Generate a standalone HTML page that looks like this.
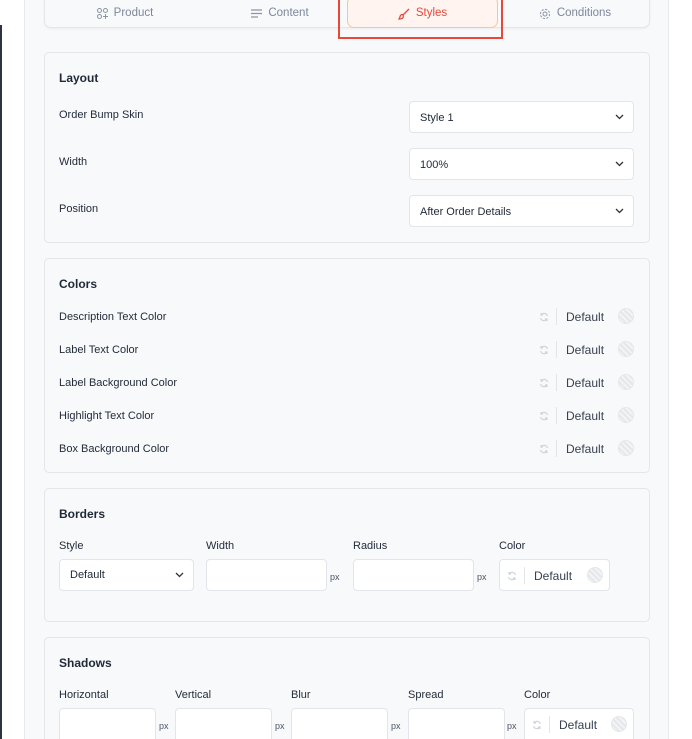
<!DOCTYPE html>
<html style="overflow:hidden;height:739px"><head><meta charset="utf-8"><style>
*{box-sizing:border-box;margin:0;padding:0}
html,body{width:692px;height:739px;overflow:hidden}
body{background:#fff;font-family:"Liberation Sans",sans-serif;position:relative;color:#1f2937}
.a{position:absolute}
.panel{left:24px;top:-2px;width:645px;height:760px;background:#f8f9fb;border:1px solid #e8eaee;border-top:none}
.tabs{left:44px;top:-6px;width:606px;height:34px;background:#f8f9fb;border:1px solid #e4e6ea;border-radius:7px;box-shadow:0 1px 2px rgba(0,0,0,.05)}
.tab{top:0;height:27px;line-height:27px;font-size:11.5px;color:#7d879a;display:flex;align-items:center;gap:6px}
.card{left:44px;width:606px;background:#f8f9fb;border:1px solid #e4e6ea;border-radius:5px}
.h{font-size:12px;font-weight:bold;color:#1f2937}
.l{font-size:11px;color:#1f2937}
.sel{background:#fff;border:1px solid #e2e5ea;border-radius:4px;font-size:11px;color:#1f2937;padding-left:10px;display:flex;align-items:center}
.sel svg{position:absolute;right:9px;top:50%;margin-top:-3px}
.inp{background:#fff;border:1px solid #e2e5ea;border-radius:4px}
.px{font-size:9px;color:#4b5563}
.cp{display:flex;align-items:center}
.ref{width:10px;height:10px}
.dv{width:1px;height:17px;background:#e2e5ea;margin:0 9px 0 7px}
.df{font-size:12px;color:#374151}
.dot{position:absolute;width:16px;height:16px;border-radius:50%;background:repeating-linear-gradient(45deg,#e5e7eb 0 2px,#f3f4f6 2px 4px);border:1px solid #e5e7eb}
</style></head><body>
<div class="a" style="left:0;top:25px;width:2px;height:714px;background:#2d3340"></div>
<div class="a panel"></div>
<div class="a tabs"></div>
<div class="a tab" style="left:70px;width:110px;justify-content:center">
<svg width="11" height="11" viewBox="0 0 11 11" fill="none" stroke="#8a94a6" stroke-width="1"><circle cx="2.5" cy="2.5" r="2"/><circle cx="8.5" cy="2.5" r="2"/><circle cx="2.5" cy="8.5" r="2"/><path d="M8.5 6v5M6 8.5h5"/></svg>Product</div>
<div class="a tab" style="left:225px;width:110px;justify-content:center">
<svg width="11" height="9" viewBox="0 0 11 9" stroke="#8a94a6" stroke-width="1.2"><path d="M0 1h11M0 4.5h11M0 8h7"/></svg>Content</div>
<div class="a" style="left:338px;top:-3px;width:165px;height:42px;border:2px solid #e8473a"></div>
<div class="a" style="left:347px;top:-4px;width:151px;height:32px;background:#fff4ef;border:1px solid #f7c49e;border-radius:7px"></div>
<div class="a tab" style="left:347px;width:151px;justify-content:center;color:#e8473a">
<svg width="12" height="12" viewBox="0 0 12 12" fill="none" stroke="#e8473a" stroke-width="1.3"><path d="M11 1L5 7M5 7c-1-1-3 0-3 2l-1 2c2 0 3.5-.5 4-1.5.5-1 .5-1.5 0-2.5z"/></svg>Styles</div>
<div class="a tab" style="left:520px;width:110px;justify-content:center">
<svg width="12" height="12" viewBox="0 0 12 12" fill="none" stroke="#8a94a6" stroke-width="1"><circle cx="6" cy="6" r="2"/><circle cx="6" cy="6" r="4.6" stroke-dasharray="2.2 1.4"/></svg>Conditions</div>

<div class="a card" style="top:52px;height:191px"></div>
<div class="a h" style="left:59px;top:71px">Layout</div>
<div class="a l" style="left:59px;top:109px">Order Bump Skin</div>
<div class="a l" style="left:59px;top:156px">Width</div>
<div class="a l" style="left:59px;top:203px">Position</div>
<div class="a sel" style="left:409px;top:101px;width:225px;height:32px;padding-top:2px">Style 1<svg width="9" height="6" viewBox="0 0 9 6" fill="none" stroke="#333" stroke-width="1.3"><path d="M1 1l3.5 3.5L8 1"/></svg></div>
<div class="a sel" style="left:409px;top:148px;width:225px;height:32px;padding-top:2px">100%<svg width="9" height="6" viewBox="0 0 9 6" fill="none" stroke="#333" stroke-width="1.3"><path d="M1 1l3.5 3.5L8 1"/></svg></div>
<div class="a sel" style="left:409px;top:195px;width:225px;height:32px;padding-top:2px">After Order Details<svg width="9" height="6" viewBox="0 0 9 6" fill="none" stroke="#333" stroke-width="1.3"><path d="M1 1l3.5 3.5L8 1"/></svg></div>

<div class="a card" style="top:258px;height:215px"></div>
<div class="a h" style="left:59px;top:277px">Colors</div>
<div class="a l" style="left:59px;top:311px">Description Text Color</div>
<div class="a l" style="left:59px;top:344px">Label Text Color</div>
<div class="a l" style="left:59px;top:377px">Label Background Color</div>
<div class="a l" style="left:59px;top:410px">Highlight Text Color</div>
<div class="a l" style="left:59px;top:443px">Box Background Color</div>

<div class="a card" style="top:488px;height:134px"></div>
<div class="a h" style="left:59px;top:507px">Borders</div>
<div class="a l" style="left:59px;top:540px">Style</div>
<div class="a l" style="left:206px;top:540px">Width</div>
<div class="a l" style="left:353px;top:540px">Radius</div>
<div class="a l" style="left:499px;top:540px">Color</div>
<div class="a sel" style="left:59px;top:559px;width:135px;height:32px">Default<svg width="9" height="6" viewBox="0 0 9 6" fill="none" stroke="#333" stroke-width="1.3"><path d="M1 1l3.5 3.5L8 1"/></svg></div>
<div class="a inp" style="left:206px;top:559px;width:121px;height:32px"></div>
<div class="a px" style="left:330px;top:572px">px</div>
<div class="a inp" style="left:353px;top:559px;width:121px;height:32px"></div>
<div class="a px" style="left:477px;top:572px">px</div>
<div class="a inp" style="left:499px;top:559px;width:111px;height:32px"></div>

<div class="a card" style="top:637px;height:130px"></div>
<div class="a h" style="left:59px;top:656px">Shadows</div>
<div class="a l" style="left:59px;top:689px">Horizontal</div>
<div class="a l" style="left:175px;top:689px">Vertical</div>
<div class="a l" style="left:291px;top:689px">Blur</div>
<div class="a l" style="left:408px;top:689px">Spread</div>
<div class="a l" style="left:524px;top:689px">Color</div>
<div class="a inp" style="left:59px;top:708px;width:97px;height:40px"></div>
<div class="a px" style="left:159px;top:721px">px</div>
<div class="a inp" style="left:175px;top:708px;width:97px;height:40px"></div>
<div class="a px" style="left:275px;top:721px">px</div>
<div class="a inp" style="left:291px;top:708px;width:97px;height:40px"></div>
<div class="a px" style="left:391px;top:721px">px</div>
<div class="a inp" style="left:408px;top:708px;width:97px;height:40px"></div>
<div class="a px" style="left:507px;top:721px">px</div>
<div class="a inp" style="left:524px;top:708px;width:110px;height:40px"></div>

<div class="a cp" style="left:539px;top:308px"><svg class="ref" viewBox="0 0 10 10" fill="none" stroke="#d1d5db" stroke-width="1.2"><path d="M8.5 4A3.6 3.6 0 0 0 2 3M1.5 6A3.6 3.6 0 0 0 8 7M2 1v2h2M8 9V7H6"/></svg><span class="dv"></span><span class="df">Default</span></div><div class="dot" style="left:618px;top:308px"></div>
<div class="a cp" style="left:539px;top:341px"><svg class="ref" viewBox="0 0 10 10" fill="none" stroke="#d1d5db" stroke-width="1.2"><path d="M8.5 4A3.6 3.6 0 0 0 2 3M1.5 6A3.6 3.6 0 0 0 8 7M2 1v2h2M8 9V7H6"/></svg><span class="dv"></span><span class="df">Default</span></div><div class="dot" style="left:618px;top:341px"></div>
<div class="a cp" style="left:539px;top:374px"><svg class="ref" viewBox="0 0 10 10" fill="none" stroke="#d1d5db" stroke-width="1.2"><path d="M8.5 4A3.6 3.6 0 0 0 2 3M1.5 6A3.6 3.6 0 0 0 8 7M2 1v2h2M8 9V7H6"/></svg><span class="dv"></span><span class="df">Default</span></div><div class="dot" style="left:618px;top:374px"></div>
<div class="a cp" style="left:539px;top:407px"><svg class="ref" viewBox="0 0 10 10" fill="none" stroke="#d1d5db" stroke-width="1.2"><path d="M8.5 4A3.6 3.6 0 0 0 2 3M1.5 6A3.6 3.6 0 0 0 8 7M2 1v2h2M8 9V7H6"/></svg><span class="dv"></span><span class="df">Default</span></div><div class="dot" style="left:618px;top:407px"></div>
<div class="a cp" style="left:539px;top:440px"><svg class="ref" viewBox="0 0 10 10" fill="none" stroke="#d1d5db" stroke-width="1.2"><path d="M8.5 4A3.6 3.6 0 0 0 2 3M1.5 6A3.6 3.6 0 0 0 8 7M2 1v2h2M8 9V7H6"/></svg><span class="dv"></span><span class="df">Default</span></div><div class="dot" style="left:618px;top:440px"></div>
<div class="a cp" style="left:507px;top:567px"><svg class="ref" viewBox="0 0 10 10" fill="none" stroke="#d1d5db" stroke-width="1.2"><path d="M8.5 4A3.6 3.6 0 0 0 2 3M1.5 6A3.6 3.6 0 0 0 8 7M2 1v2h2M8 9V7H6"/></svg><span class="dv"></span><span class="df">Default</span></div><div class="dot" style="left:587px;top:567px"></div>
<div class="a cp" style="left:532px;top:716px"><svg class="ref" viewBox="0 0 10 10" fill="none" stroke="#d1d5db" stroke-width="1.2"><path d="M8.5 4A3.6 3.6 0 0 0 2 3M1.5 6A3.6 3.6 0 0 0 8 7M2 1v2h2M8 9V7H6"/></svg><span class="dv"></span><span class="df">Default</span></div><div class="dot" style="left:611px;top:716px"></div>
</body></html>
